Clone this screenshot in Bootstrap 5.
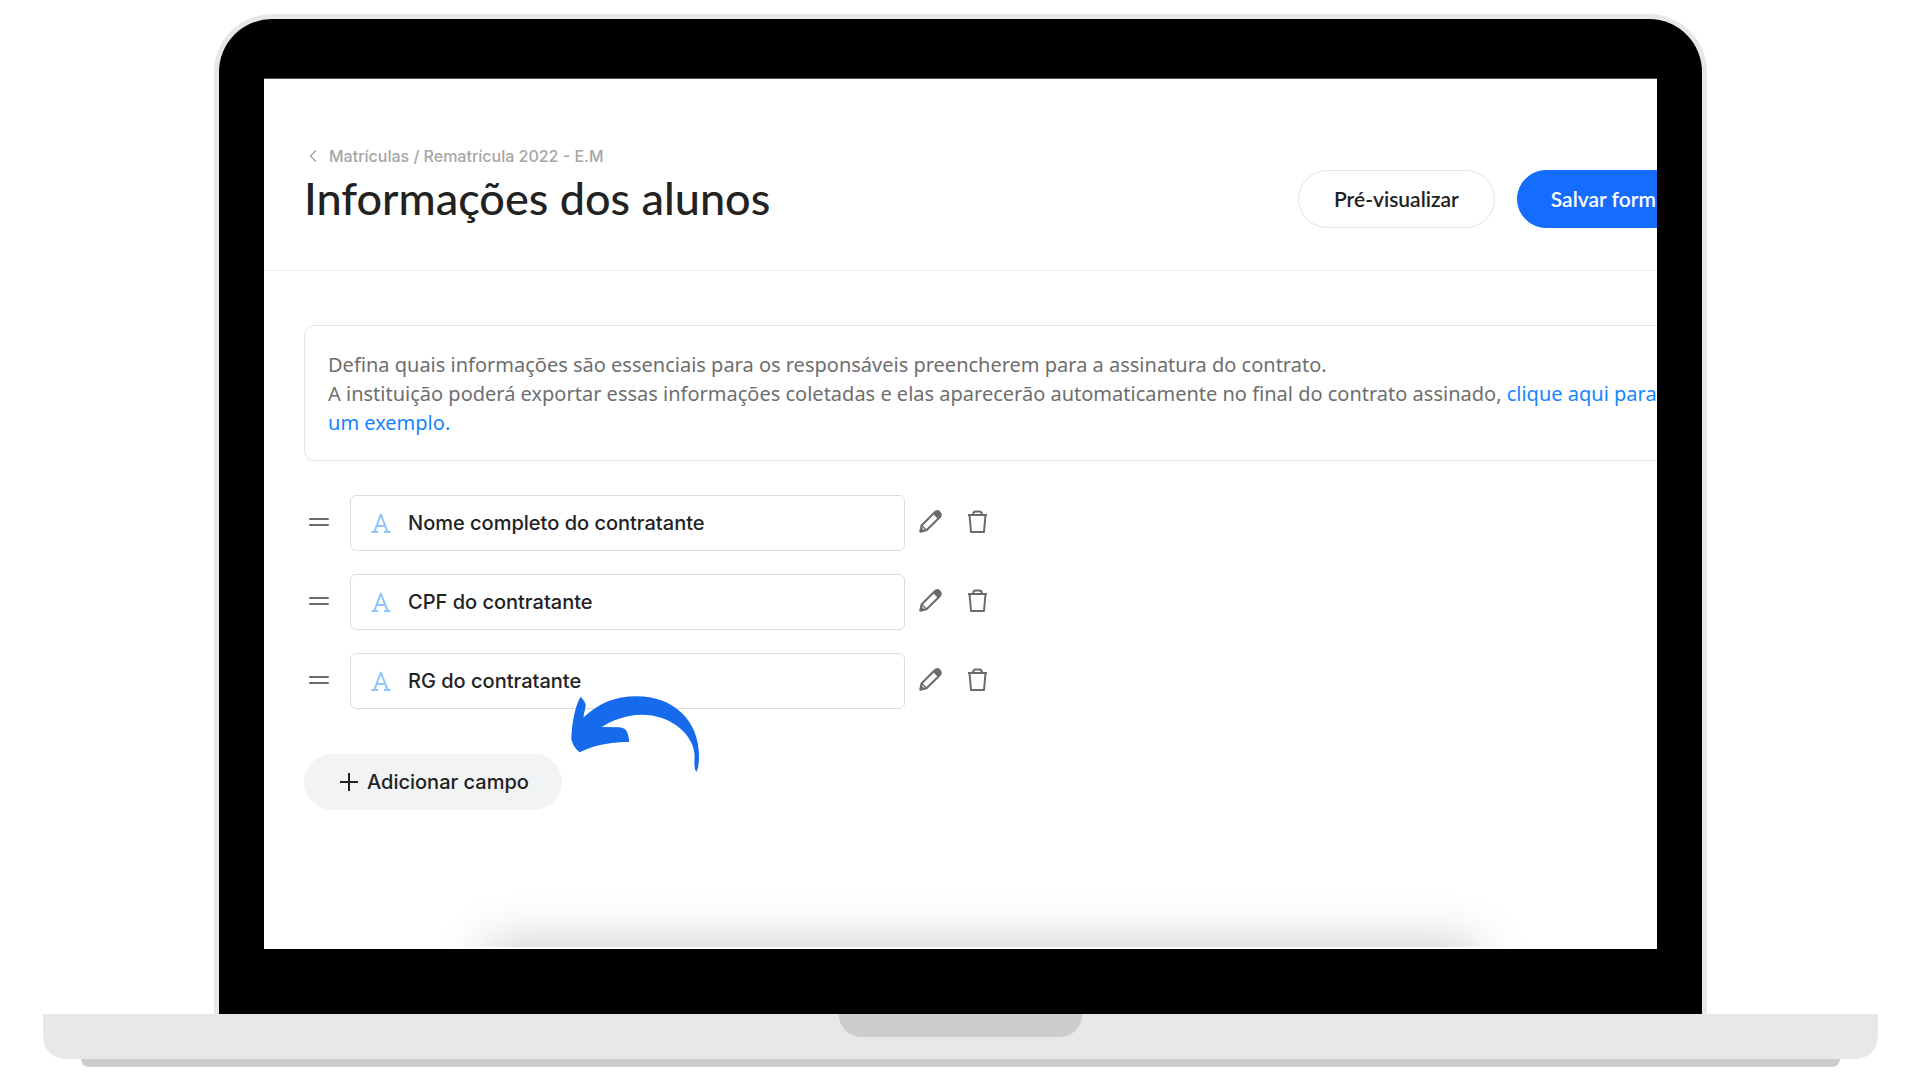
<!DOCTYPE html>
<html lang="pt-BR">
<head>
<meta charset="utf-8">
<meta name="viewport" content="width=device-width, initial-scale=1">
<title>Informações dos alunos</title>
<link href="https://cdn.jsdelivr.net/npm/bootstrap@5.3.0/dist/css/bootstrap.min.css" rel="stylesheet">
<style>
  body { font-family: Inter, "Liberation Sans", sans-serif; font-size: 20px; color: #222; background: #fff; }

  /* Laptop */
  .laptop { padding: 14px 0 0 1px; }
  .laptop-lid { width: 77.8%; background: #000; border: 5px solid #e8e8e8; border-bottom: 0; border-radius: 58px 58px 0 0; padding: 59px 45px 65px; }
  .laptop-screen { aspect-ratio: 16 / 10; background: #fff; border-top: 1px solid #555; border-bottom: 2px solid #fff; }
  .laptop-base { width: 95.6%; height: 45px; background: #e8e8e8; border-radius: 0 0 22px 22px; }
  .laptop-notch { width: 243px; height: 23px; background: #ccc; border-radius: 0 0 22px 22px; }
  .laptop-foot { width: 91.7%; height: 8px; background: #ccc; border-radius: 0 0 8px 8px; }

  /* The app runs wider than the visible screen */
  .app-view { width: 110%; }
  .app-head { padding: 67px 54px 42px 40px; border-bottom: 1px solid #efefef; }
  .app-crumb { font-size: 16px; line-height: 20px; font-weight: 500; color: #a6a6a6; }
  .app-title { font-family: Lato, sans-serif; font-size: 45px; line-height: 54px; font-weight: 500; margin: 5px 0 3px; }
  .app-actions { gap: 22px; }
  .app-body { padding: 54px 40px; }
  .pill { --bs-btn-font-size: 20px; --bs-btn-font-weight: 500; --bs-btn-line-height: 30px; --bs-btn-padding-y: 13px; --bs-btn-padding-x: 35px; }
  .app-head .pill { --bs-btn-font-family: Lato, sans-serif; --bs-btn-font-size: 21px; --bs-btn-font-weight: 600; }
  .pill-outline { --bs-btn-color: #222; --bs-btn-border-color: #e4e4e4; --bs-btn-bg: #fff; }
  .pill-blue { --bs-btn-color: #fff; --bs-btn-bg: #146dff; --bs-btn-border-color: #146dff; --bs-btn-padding-x: 33px; }
  .pill-grey { --bs-btn-color: #222; --bs-btn-bg: #f1f3f5; --bs-btn-border-color: #f1f3f5; --bs-btn-padding-y: 12px; --bs-btn-padding-x: 32px; }

  .note { font-family: "Noto Sans", sans-serif; border: 1px solid #e4e4e4; border-radius: 10px; padding: 24px 23px 23px; line-height: 29px; color: #6e6e6e; white-space: nowrap; }
  .note a { color: #1485ff; }
  .field-list { margin-top: 34px; gap: 23px; }
  .field-box { width: 555px; height: 56px; border: 1px solid #dcdcdc; border-radius: 6px; padding: 0 20px; gap: 17px; }
  .field-box input { font-weight: 500; color: #222; outline: 0; }
  .icon-btn { border: 0; background: none; padding: 0 0 3px; color: #6b6b6b; line-height: 0; }
  .edit-btn { margin-left: 14px; }
  .delete-btn { margin-left: 24px; }
  .grip { width: 46px; padding-left: 5px; text-align: left; }
  .add-row { margin-top: 45px; }
  .arrow { position: absolute; left: 267px; top: -58px; }
  .dock-glow { position: absolute; left: 16%; right: 13%; top: 100%; height: 60px; box-shadow: 0 0 54px rgba(0,0,0,.24); }
</style>
</head>
<body>
<div class="laptop d-flex flex-column align-items-center">
  <div class="laptop-lid">
    <div class="laptop-screen overflow-hidden position-relative">
      <div class="app-view">
        <header class="app-head d-flex justify-content-between align-items-end">
          <div>
            <a href="#" class="app-crumb d-flex align-items-center text-decoration-none">
              <svg width="25" height="14" viewBox="0 0 25 14" fill="none" stroke="currentColor" stroke-width="1.5" aria-hidden="true"><path d="M12 1.5 6.500 7l5.500 5.500"/></svg>
              Matrículas / Rematrícula 2022 - E.M
            </a>
            <h1 class="app-title">Informações dos alunos</h1>
          </div>
          <div class="app-actions d-flex">
            <button type="button" class="btn pill pill-outline rounded-pill">Pré-visualizar</button>
            <button type="button" class="btn pill pill-blue rounded-pill">Salvar formulário</button>
          </div>
        </header>

        <main class="app-body">
          <p class="note mb-0">Defina quais informações são essenciais para os responsáveis preencherem para a assinatura do contrato.<br>
            A instituição poderá exportar essas informações coletadas e elas aparecerão automaticamente no final do contrato assinado, <a href="#" class="text-decoration-none">clique aqui para ver<br>um exemplo.</a></p>

          <div class="field-list d-flex flex-column" id="fields"></div>

          <div class="add-row position-relative">
            <button type="button" class="btn pill pill-grey rounded-pill d-inline-flex align-items-center gap-2">
              <svg width="22" height="18" viewBox="0 0 22 18" stroke="currentColor" stroke-width="2" aria-hidden="true"><path d="M3 9h18M12 0v18"/></svg>
              Adicionar campo
            </button>
            <svg class="arrow" width="129" height="76" viewBox="843 167 387 228" fill="#166bed" aria-hidden="true"><path d="M872 169C880 178 888 188 887 196C886 210 880 220 881 231C925 190 975 168 1040 168C1150 168 1228 240 1227 350C1227 365 1224 390 1219 394C1214 390 1212 370 1214 350C1214 280 1140 223 1055 223C1010 223 965 240 935 260L988 261C1010 262 1016 280 1018 305C975 305 920 310 869 336C850 320 843 300 844 290C846 250 855 195 872 169Z"/></svg>
          </div>
        </main>
      </div>
      <div class="dock-glow"></div>
    </div>
  </div>
  <div class="laptop-base d-flex justify-content-center"><div class="laptop-notch"></div></div>
  <div class="laptop-foot"></div>
</div>

<template id="field-row">
  <div class="d-flex align-items-center">
    <button type="button" class="icon-btn grip" aria-label="Mover"><svg width="20" height="10" viewBox="0 0 20 10" stroke="currentColor" stroke-width="2" stroke-linecap="round"><path d="M1 2h18M1 8h18"/></svg></button>
    <label class="field-box d-flex align-items-center">
      <svg width="20" height="20" viewBox="0 0 20 20" fill="none" stroke="#8cc4ff" stroke-width="2" stroke-linejoin="round" aria-hidden="true"><path d="M3.500 18.500 9.800 1.500 16.500 18.500M5.500 13H14.500M.500 19H7M13 19H19.500"/></svg>
      <input type="text" class="border-0 p-0 flex-grow-1 bg-transparent" aria-label="Campo">
    </label>
    <button type="button" class="icon-btn edit-btn" aria-label="Editar"><svg width="23" height="23" viewBox="0 0 23 23" fill="none" stroke="currentColor" stroke-width="2" stroke-linejoin="round"><path d="M1.500 21.500 2.500 15.500 15.500 2.500C17 1 19 .800 20.500 2.200C22 3.700 22 5.800 20.700 7.300L7.500 20.300Z"/><path d="M3 15.500 5 17.800 7.500 20" stroke-width="1.500"/><path d="M14 4 17 1.500C19 .500 22 2.500 22 5.500L19 9Z" fill="currentColor" stroke="none"/><path d="M1.500 21.500 2 18.500 4.500 21Z" fill="currentColor"/></svg></button>
    <button type="button" class="icon-btn delete-btn" aria-label="Excluir"><svg width="23" height="23" viewBox="0 0 23 23" fill="none" stroke="currentColor" stroke-width="2" stroke-linejoin="round"><path d="M2 5H21M3.500 5 5 22H18L19.500 5M7 5C7 2.500 8 1.500 9.500 1.500H13.500C15 1.500 16 2.500 16 5"/></svg></button>
  </div>
</template>

<script src="https://cdn.jsdelivr.net/npm/bootstrap@5.3.0/dist/js/bootstrap.bundle.min.js"></script>
<script>
  const tpl = document.getElementById('field-row');
  for (const name of ['Nome completo do contratante', 'CPF do contratante', 'RG do contratante']) {
    const row = tpl.content.cloneNode(true);
    row.querySelector('input').value = name;
    document.getElementById('fields').append(row);
  }
</script>
</body>
</html>
